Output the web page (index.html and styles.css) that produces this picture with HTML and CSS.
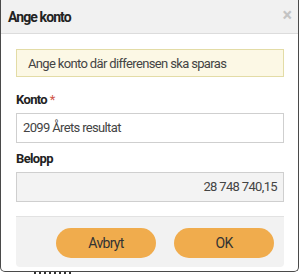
FILE: index.html
```html
<!DOCTYPE html>
<html lang="sv">
<head>
    <meta charset="UTF-8">
    <meta name="viewport" content="width=device-width, initial-scale=1.0">
    <title>Ange konto</title>
    <link rel="stylesheet" href="styles.css">
</head>
<body>
    <div class="modal">
        <header class="modal-head">
            <h4 class="title">Ange konto</h4>
            <span class="close">&times;</span>
        </header>
        <div class="modal-body">
            <div class="alert">Ange konto där differensen ska sparas</div>
            <label class="label">Konto <span class="req">*</span></label>
            <div class="input">2099 Årets resultat</div>
            <label class="label">Belopp</label>
            <div class="input disabled">28 748 740,15</div>
            <div class="actions">
                <button class="btn">Avbryt</button>
                <button class="btn">OK</button>
            </div>
        </div>
    </div>
    <div class="behind"></div>
</body>
</html>
```

FILE: styles.css
```css
*{
    margin: 0;
    padding: 0;
    box-sizing: border-box;
}
html{
    background-color: #fff;
}
body{
    font-family: Roboto, "Liberation Sans", sans-serif;
    font-size: 13px;
    color: #333;
    letter-spacing: -0.65px;
}
.modal
{
    width: 299px;
    height: 272px;
    border: 1px solid #4a4a4a;
    border-top: none;
    border-radius: 0 0 5px 5px;
    background-color: #fff;
    overflow: hidden;
}
.modal-head
{
    display: flex;
    justify-content: space-between;
    align-items: center;
    height: 34px;
    padding: 0 6px 0 7px;
    background-color: #f1f1f1;
    border-bottom: 1px solid #dcdcdc;
}
.title
{
    font-size: 14px;
    font-weight: bold;
    color: #222;
    letter-spacing: -0.9px;
}
.close
{
    font-size: 18px;
    font-weight: bold;
    color: #c4c4c4;
    margin-top: -4px;
    letter-spacing: 0;
}
.modal-body
{
    padding: 15px 14px 0 15px;
}
.alert
{
    height: 28px;
    padding: 0 11px;
    line-height: 27px;
    background-color: #fcf8e5;
    border: 1px solid #e3dca6;
    color: #444;
    margin-bottom: 16px;
}
.label
{
    display: block;
    font-weight: bold;
    color: #222;
    line-height: 14px;
    margin-bottom: 6px;
}
.req
{
    color: #d0574a;
    font-weight: normal;
}
.input
{
    height: 30px;
    line-height: 28px;
    padding: 0 6px;
    border: 1px solid #cfcfcf;
    color: #444;
    margin-bottom: 9px;
}
.disabled
{
    background-color: #f3f3f3;
    text-align: right;
    margin-bottom: 14px;
}
.actions
{
    display: flex;
    justify-content: flex-end;
    gap: 18px;
    height: 51px;
    padding: 11px 10px 0 0;
    background-color: #f2f2f2;
    border-top: 1px solid #e2e2e2;
    border-radius: 0 0 4px 4px;
}
.btn
{
    width: 100px;
    height: 30px;
    border: none;
    border-radius: 15px;
    background-color: #f0ac4d;
    color: #333;
    font-family: inherit;
    font-size: 14px;
    letter-spacing: -0.7px;
}
.behind
{
    margin-left: 34px;
    width: 40px;
    height: 2px;
    background: repeating-linear-gradient(90deg, #333 0 2px, transparent 2px 5px);
}
```
